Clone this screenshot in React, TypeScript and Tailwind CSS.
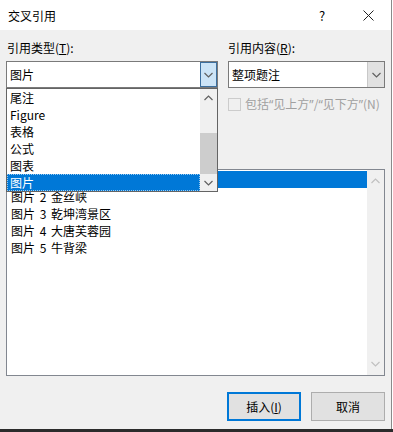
import type { ReactNode } from 'react';

const FONT = 'font-["Microsoft_YaHei_UI","Noto_Sans_CJK_SC",sans-serif]';

// first row is selected and sits under the open dropdown, so its text never shows
const captions = ['', '图片 2 金丝峡', '图片 3 乾坤湾景区', '图片 4 大唐芙蓉园', '图片 5 牛背梁'];
const types = ['尾注', 'Figure', '表格', '公式', '图表', '图片'];

function Chevron({ up = false, color = '#606060' }: { up?: boolean; color?: string }) {
  return (
    <svg width="9" height="6" viewBox="0 0 9 6" fill="none">
      <polyline
        points={up ? '0.5,5 4.5,1 8.5,5' : '0.5,1 4.5,5 8.5,1'}
        stroke={color}
        strokeWidth="1.2"
      />
    </svg>
  );
}

function Combo({ value, active }: { value: string; active?: boolean }) {
  return (
    <div className="flex h-[27px] border border-[#7a7a7a] bg-white">
      <div className="flex flex-1 items-center pl-[3px] text-[12px] text-black">{value}</div>
      <div
        className={
          active
            ? 'flex w-[17px] items-center justify-center border border-[#3c6f9f] bg-[#cce4f7]'
            : 'flex w-[17px] items-center justify-center border-l border-[#c8c8c8] bg-[#e1e1e1]'
        }
      >
        <Chevron />
      </div>
    </div>
  );
}

function Button({ children, primary }: { children: ReactNode; primary?: boolean }) {
  return (
    <div
      className={
        primary
          ? 'flex h-[29px] w-[74px] items-center justify-center border-2 border-[#0078d7] bg-[#e1e1e1] text-[12px]'
          : 'flex h-[29px] w-[74px] items-center justify-center border border-[#adadad] bg-[#e1e1e1] text-[12px]'
      }
    >
      {children}
    </div>
  );
}

// curly quotes in a latin font stay narrow, like the YaHei ones in the dialog
function Q({ c }: { c: string }) {
  return <span className='font-["Noto_Sans",sans-serif]'>{c}</span>;
}

export default function App() {
  return (
    <div className={`${FONT} relative h-[432px] w-[393px] bg-white text-black`}>
      <div className="flex h-[429px] w-[392px] flex-col border-r border-[#8a8a8a] bg-[#f0f0f0]">
        {/* title bar */}
        <div className="flex h-[30px] shrink-0 items-center bg-white pl-[8px] pt-[1px] text-[12px]">
          <span className="flex-1">交叉引用</span>
          <span className="w-[46px] text-center text-[13px]">?</span>
          <span className="flex w-[46px] items-center justify-center">
            <svg width="11" height="11" viewBox="0 0 11 11">
              <path d="M0.5 0.5 L10.5 10.5 M10.5 0.5 L0.5 10.5" stroke="#222" strokeWidth="1" />
            </svg>
          </span>
        </div>

        <div className="flex flex-1 flex-col px-[6px] pt-[10px] text-[12px] leading-[16px]">
          <div className="grid grid-cols-[212px_157px] gap-x-[10px]">
            <div className="pl-[1px]">
              引用类型(<span className="underline">T</span>):
            </div>
            <div>
              引用内容(<span className="underline">R</span>):
            </div>
            <div className="mt-[5px]">
              <Combo value="图片" active />
            </div>
            <div className="mt-[5px]">
              <Combo value="整项题注" />
            </div>
            <div />
            <div className="mt-[8px] flex h-[16px] items-center gap-[4px] whitespace-nowrap text-[#a0a0a0]">
              <div className="h-[13px] w-[13px] shrink-0 border border-[#cccccc] bg-[#f0f0f0]" />
              <span>
                包括<Q c="“" />见上方<Q c="”" />/<Q c="“" />见下方<Q c="”" />(N)
              </span>
            </div>
          </div>

          {/* caption list */}
          <div className="mt-[57px] flex h-[207px] shrink-0 border border-[#828790] bg-white">
            <div className="flex flex-1 flex-col pl-[1px] pt-[1px] leading-[14px]">
              {captions.map((c, i) => (
                <div
                  key={i}
                  className={
                    i === 0
                      ? 'flex h-[17px] items-center bg-[#0078d7] pl-[3px] text-white'
                      : 'flex h-[17px] items-center pl-[3px] [word-spacing:2px]'
                  }
                >
                  {c}
                </div>
              ))}
            </div>
            <div className="flex w-[17px] flex-col items-center justify-between bg-[#f0f0f0] py-[8px]">
              <Chevron up color="#c0c0c0" />
              <Chevron color="#c0c0c0" />
            </div>
          </div>

          <div className="mt-[16px] flex justify-end gap-[10px]">
            <Button primary>
              <span>
                插入(<span className="underline">I</span>)
              </span>
            </Button>
            <Button>取消</Button>
          </div>
        </div>
      </div>
      <div className="h-[3px] w-full bg-[#2b2b2b]" />

      {/* open dropdown of 引用类型 */}
      <div className="absolute left-[6px] top-[88px] flex h-[104px] w-[212px] border border-[#646464] bg-white text-[12px] leading-[14px]">
        <div className="flex flex-1 flex-col">
          {types.map((t, i) => (
            <div
              key={t}
              className={
                i === types.length - 1
                  ? 'flex h-[17px] items-center border border-dotted border-[#99c9ef] bg-[#0078d7] pl-[2px] text-white'
                  : 'flex h-[17px] items-center pl-[3px]'
              }
            >
              {t}
            </div>
          ))}
        </div>
        <div className="flex w-[17px] flex-col bg-[#f0f0f0]">
          <div className="flex h-[17px] items-center justify-center">
            <Chevron up />
          </div>
          <div className="h-[27px]" />
          <div className="h-[41px] bg-[#cdcdcd]" />
          <div className="flex h-[17px] items-center justify-center">
            <Chevron />
          </div>
        </div>
      </div>
    </div>
  );
}
